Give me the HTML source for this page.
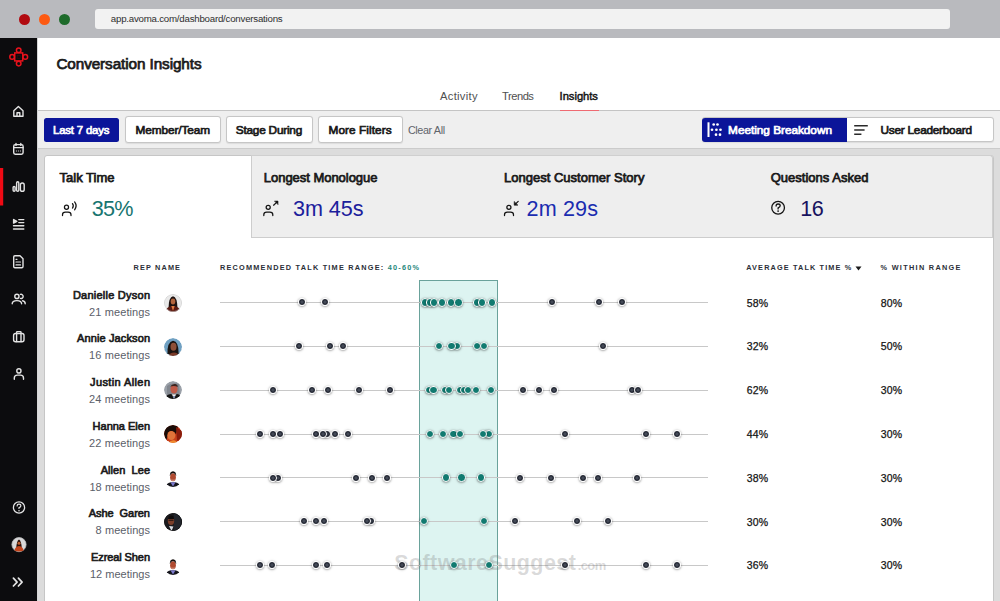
<!DOCTYPE html>
<html><head><meta charset="utf-8"><style>
html,body{margin:0;padding:0;}
body{width:1000px;height:601px;position:relative;overflow:hidden;background:#fff;font-family:"Liberation Sans", sans-serif;}
.t{position:absolute;white-space:nowrap;line-height:1;}
.dd,.dt{position:absolute;border-radius:50%;border:1.5px solid #fff;box-shadow:0 0.5px 2.2px rgba(0,0,0,.5);}
.dd{width:6px;height:6px;background:radial-gradient(circle,#444a57 0,#444a57 24%,#161a26 60%);}
.dt{width:6.3px;height:6.3px;background:#117a70;}
.av{position:absolute;width:18px;height:18px;border-radius:50%;background:#555;}
</style></head><body>
<div style="position:absolute;left:0px;top:0px;width:1000px;height:38px;background:#b9babe"></div>
<div style="position:absolute;left:18.7px;top:14px;width:11px;height:11px;border-radius:50%;background:#b10a10"></div>
<div style="position:absolute;left:39.1px;top:14px;width:11px;height:11px;border-radius:50%;background:#fd5a12"></div>
<div style="position:absolute;left:59.3px;top:14px;width:11px;height:11px;border-radius:50%;background:#1e6b2b"></div>
<div style="position:absolute;left:95px;top:9px;width:855px;height:20px;border-radius:3px;background:#f2f2f2"></div>
<div class="t" style="left:110.80px;top:14.00px;font-size:9.7px;font-weight:400;color:#2e2e2e;letter-spacing:-0.222px;">app.avoma.com/dashboard/conversations</div>
<div style="position:absolute;left:0px;top:38px;width:37px;height:563px;background:#0c0c0e"></div>
<div style="position:absolute;left:37px;top:38px;width:1px;height:563px;background:#d6d6d6"></div>
<div class="t" style="left:56.40px;top:56.00px;font-size:15.3px;font-weight:400;color:#1b1b1b;letter-spacing:-0.097px;-webkit-text-stroke:0.75px #1b1b1b;">Conversation Insights</div>
<div class="t" style="left:440.00px;top:91.00px;font-size:11.2px;font-weight:400;color:#505050;letter-spacing:0.304px;">Activity</div>
<div class="t" style="left:502.00px;top:91.00px;font-size:11.2px;font-weight:400;color:#505050;letter-spacing:-0.489px;">Trends</div>
<div class="t" style="left:559.60px;top:91.00px;font-size:11.2px;font-weight:400;color:#141414;letter-spacing:-0.028px;-webkit-text-stroke:0.45px #141414;">Insights</div>
<div style="position:absolute;left:38px;top:110px;width:962px;height:1px;background:#c4c4c4"></div>
<div style="position:absolute;left:559.5px;top:110px;width:39px;height:1px;background:#ef6a72"></div>
<div style="position:absolute;left:38px;top:111px;width:962px;height:37px;background:#efefef"></div>
<div style="position:absolute;left:38px;top:148px;width:962px;height:1px;background:#cbcbcb"></div>
<div style="position:absolute;left:38px;top:149px;width:962px;height:452px;background:#dcdcdc"></div>
<div style="position:absolute;left:44px;top:117.5px;width:75px;height:24.5px;border-radius:2.5px;background:#0b1599"></div>
<div class="t" style="left:53.00px;top:125.00px;font-size:11.3px;font-weight:400;color:#ffffff;letter-spacing:-0.139px;-webkit-text-stroke:0.68px #ffffff;">Last 7 days</div>
<div style="position:absolute;left:125px;top:116px;width:94px;height:24.5px;border:1px solid #c6c6c6;border-radius:3px;background:#fff;box-shadow:0 0.5px 1px rgba(0,0,0,0.08)"></div>
<div class="t" style="left:135.60px;top:125.00px;font-size:11.8px;font-weight:400;color:#1a1a1a;letter-spacing:-0.101px;-webkit-text-stroke:0.71px #1a1a1a;">Member/Team</div>
<div style="position:absolute;left:226px;top:116px;width:85px;height:24.5px;border:1px solid #c6c6c6;border-radius:3px;background:#fff;box-shadow:0 0.5px 1px rgba(0,0,0,0.08)"></div>
<div class="t" style="left:235.80px;top:125.00px;font-size:11.8px;font-weight:400;color:#1a1a1a;letter-spacing:-0.216px;-webkit-text-stroke:0.71px #1a1a1a;">Stage During</div>
<div style="position:absolute;left:318px;top:116px;width:83px;height:24.5px;border:1px solid #c6c6c6;border-radius:3px;background:#fff;box-shadow:0 0.5px 1px rgba(0,0,0,0.08)"></div>
<div class="t" style="left:328.50px;top:125.00px;font-size:11.8px;font-weight:400;color:#1a1a1a;letter-spacing:0.074px;-webkit-text-stroke:0.71px #1a1a1a;">More Filters</div>
<div class="t" style="left:407.90px;top:125.00px;font-size:10.8px;font-weight:400;color:#5f646b;letter-spacing:-0.377px;">Clear All</div>
<div style="position:absolute;left:701.8px;top:117px;width:290px;height:22.6px;border:1px solid #c6c6c6;border-radius:3px;background:#fff;box-shadow:0 0.5px 1px rgba(0,0,0,0.08)"></div>
<div style="position:absolute;left:701.8px;top:117.5px;width:145.7px;height:24.5px;border-radius:3px 0 0 3px;background:#0b1599"></div>
<div class="t" style="left:728.10px;top:125.00px;font-size:11.8px;font-weight:400;color:#ffffff;letter-spacing:-0.025px;-webkit-text-stroke:0.71px #ffffff;">Meeting Breakdown</div>
<div class="t" style="left:880.60px;top:125.00px;font-size:11.8px;font-weight:400;color:#1a1a1a;letter-spacing:-0.248px;-webkit-text-stroke:0.71px #1a1a1a;">User Leaderboard</div>
<div style="position:absolute;left:44px;top:155px;width:947.6px;height:460px;border:1px solid #c6c6c6;border-radius:3px;background:#fff"></div>
<div style="position:absolute;left:251px;top:155px;width:742px;height:83px;background:#eeeeee;border-left:1px solid #cdcdcd;border-bottom:1px solid #cdcdcd;border-top:1px solid #cfcfcf;border-right:1px solid #cfcfcf;border-radius:0 3px 0 0;box-sizing:border-box"></div>
<div class="t" style="left:59.50px;top:171.00px;font-size:13px;font-weight:400;color:#1a1a1a;letter-spacing:0.012px;-webkit-text-stroke:0.75px #1a1a1a;">Talk Time</div>
<div class="t" style="left:263.80px;top:171.00px;font-size:13px;font-weight:400;color:#1a1a1a;letter-spacing:-0.031px;-webkit-text-stroke:0.75px #1a1a1a;">Longest Monologue</div>
<div class="t" style="left:504.00px;top:171.00px;font-size:13px;font-weight:400;color:#1a1a1a;letter-spacing:0.011px;-webkit-text-stroke:0.75px #1a1a1a;">Longest Customer Story</div>
<div class="t" style="left:770.70px;top:171.00px;font-size:13px;font-weight:400;color:#1a1a1a;letter-spacing:0.017px;-webkit-text-stroke:0.75px #1a1a1a;">Questions Asked</div>
<div class="t" style="left:91.80px;top:198.00px;font-size:21.6px;font-weight:400;color:#177570;letter-spacing:-0.766px;">35%</div>
<div class="t" style="left:293.00px;top:198.00px;font-size:21.6px;font-weight:400;color:#1b209c;letter-spacing:-0.067px;">3m 45s</div>
<div class="t" style="left:526.60px;top:198.00px;font-size:21.6px;font-weight:400;color:#1a2cb0;letter-spacing:0.113px;">2m 29s</div>
<div class="t" style="left:800.20px;top:198.00px;font-size:21.6px;font-weight:400;color:#17125e;letter-spacing:-0.427px;">16</div>
<div class="t" style="left:133.60px;top:264.00px;font-size:7.3px;font-weight:700;color:#2b2f38;letter-spacing:1.143px;">REP NAME</div>
<div class="t" style="left:220.00px;top:264.00px;font-size:7.3px;font-weight:700;color:#2b2f38;letter-spacing:1.230px;">RECOMMENDED TALK TIME RANGE: <span style="color:#1f877c">40-60%</span></div>
<div class="t" style="left:746.25px;top:264.00px;font-size:7.3px;font-weight:700;color:#2b2f38;letter-spacing:1.139px;">AVERAGE TALK TIME %</div>
<svg style="position:absolute;left:855px;top:266px" width="7" height="5"><path d="M0.5 0.5 H6.5 L3.5 4.5 Z" fill="#1a1a1a"/></svg>
<div class="t" style="left:880.50px;top:264.00px;font-size:7.3px;font-weight:700;color:#2b2f38;letter-spacing:1.319px;">% WITHIN RANGE</div>
<div style="position:absolute;left:419.1px;top:280.2px;width:79px;height:340px;background:#ddf4f1;border:1px solid #6aa29b;box-sizing:border-box"></div>
<div class="t" style="right:849.76px;top:290.00px;font-size:11px;font-weight:400;color:#1a1a1a;letter-spacing:0.240px;-webkit-text-stroke:0.66px #1a1a1a;">Danielle Dyson</div>
<div class="t" style="right:849.90px;top:307.00px;font-size:11px;font-weight:400;color:#5b6069;letter-spacing:0.097px;">21 meetings</div>
<svg style="position:absolute;left:162.60px;top:292.90px" width="20" height="20" viewBox="0 0 20 20"><defs><clipPath id="avc0"><circle cx="10" cy="10" r="9"/></clipPath></defs><g clip-path="url(#avc0)"><circle cx="10" cy="10" r="9" fill="#e9e9e9"/><path d="M5.5 15 Q5.8 4 10 3.3 Q14.2 4 14.5 15 Z" fill="#1d1210"/><ellipse cx="10" cy="8.6" rx="2.3" ry="3" fill="#b2643c"/><path d="M2.5 19 Q3 13.5 10 13 Q17 13.5 17.5 19 Z" fill="#5a1a12"/><path d="M8.3 13 L10 18 L11.7 13 Z" fill="#e07a40"/><circle cx="10" cy="10" r="8.7" fill="none" stroke="#cfcfcf" stroke-width="0.7"/></g></svg>
<div style="position:absolute;left:219.8px;top:302.3px;width:488.6px;height:1px;background:#c8c8c8"></div>
<div class="t" style="left:746.70px;top:298.00px;font-size:10.5px;font-weight:400;color:#141414;letter-spacing:0.142px;-webkit-text-stroke:0.25px #141414;">58%</div>
<div class="t" style="left:880.80px;top:298.00px;font-size:10.5px;font-weight:400;color:#141414;letter-spacing:0.142px;-webkit-text-stroke:0.25px #141414;">80%</div>
<div class="t" style="right:849.88px;top:333.00px;font-size:11px;font-weight:400;color:#1a1a1a;letter-spacing:0.121px;-webkit-text-stroke:0.66px #1a1a1a;">Annie Jackson</div>
<div class="t" style="right:849.90px;top:350.00px;font-size:11px;font-weight:400;color:#5b6069;letter-spacing:0.097px;">16 meetings</div>
<svg style="position:absolute;left:162.60px;top:336.68px" width="20" height="20" viewBox="0 0 20 20"><defs><clipPath id="avc1"><circle cx="10" cy="10" r="9"/></clipPath></defs><g clip-path="url(#avc1)"><circle cx="10" cy="10" r="9" fill="#6fa0c2"/><path d="M1 12 Q3 17 8 19 H1 Z" fill="#3a6a8a"/><path d="M19 12 Q17 17 12 19 H19 Z" fill="#3a6a8a"/><path d="M4.5 17 Q4 5 10 3.8 Q16 4.5 15.6 17 Z" fill="#1a1412"/><ellipse cx="10.5" cy="9.8" rx="3" ry="4" fill="#8e5038"/><path d="M5 19 Q7 15.5 11 15.5 Q15 15.5 16 19 Z" fill="#7a3a28"/></g></svg>
<div style="position:absolute;left:219.8px;top:346.08px;width:488.6px;height:1px;background:#c8c8c8"></div>
<div class="t" style="left:746.70px;top:341.00px;font-size:10.5px;font-weight:400;color:#141414;letter-spacing:0.142px;-webkit-text-stroke:0.25px #141414;">32%</div>
<div class="t" style="left:880.80px;top:341.00px;font-size:10.5px;font-weight:400;color:#141414;letter-spacing:0.142px;-webkit-text-stroke:0.25px #141414;">50%</div>
<div class="t" style="right:849.60px;top:377.00px;font-size:11px;font-weight:400;color:#1a1a1a;letter-spacing:0.396px;-webkit-text-stroke:0.66px #1a1a1a;">Justin Allen</div>
<div class="t" style="right:849.90px;top:394.00px;font-size:11px;font-weight:400;color:#5b6069;letter-spacing:0.097px;">24 meetings</div>
<svg style="position:absolute;left:162.60px;top:380.46px" width="20" height="20" viewBox="0 0 20 20"><defs><clipPath id="avc2"><circle cx="10" cy="10" r="9"/></clipPath></defs><g clip-path="url(#avc2)"><circle cx="10" cy="10" r="9" fill="#9aa0a8"/><path d="M4 6 Q9 2 16 4 L17 19 H4 Z" fill="#6a6e76" opacity="0.5"/><ellipse cx="11" cy="9" rx="3.6" ry="4.6" fill="#c05a48"/><path d="M7.2 6.5 Q9 3.6 12.5 4 Q15 4.5 14.8 7 Q12 5.5 7.2 6.5 Z" fill="#3a2420"/><path d="M1.5 19 Q3 14.5 8 14 L11 16 L14 14 Q18 14.5 19 19 Z" fill="#141414"/><path d="M9 14.5 L11 19 L13 14.5 Z" fill="#f0f0f0"/><path d="M10.4 16 L11 19 L11.6 16 Z" fill="#1c3c8c"/></g></svg>
<div style="position:absolute;left:219.8px;top:389.86px;width:488.6px;height:1px;background:#c8c8c8"></div>
<div class="t" style="left:746.70px;top:385.00px;font-size:10.5px;font-weight:400;color:#141414;letter-spacing:0.142px;-webkit-text-stroke:0.25px #141414;">62%</div>
<div class="t" style="left:880.80px;top:385.00px;font-size:10.5px;font-weight:400;color:#141414;letter-spacing:0.142px;-webkit-text-stroke:0.25px #141414;">30%</div>
<div class="t" style="right:850.01px;top:421.00px;font-size:11px;font-weight:400;color:#1a1a1a;letter-spacing:-0.010px;-webkit-text-stroke:0.66px #1a1a1a;">Hanna Elen</div>
<div class="t" style="right:849.90px;top:438.00px;font-size:11px;font-weight:400;color:#5b6069;letter-spacing:0.097px;">22 meetings</div>
<svg style="position:absolute;left:162.60px;top:424.24px" width="20" height="20" viewBox="0 0 20 20"><defs><clipPath id="avc3"><circle cx="10" cy="10" r="9"/></clipPath></defs><g clip-path="url(#avc3)"><circle cx="10" cy="10" r="9" fill="#c8401a"/><path d="M1 10 Q1 1 10 1 Q13 1 15 2.5 L13 10 Q10 6 6 8 L3 17 Z" fill="#1a0c08"/><ellipse cx="8.3" cy="11.5" rx="4" ry="4.6" fill="#e0743a"/><path d="M13 3 L19 7 V14 L14 17 Z" fill="#8a1c0c"/><path d="M5 19 Q8 15.5 12 16.5 L15 19 Z" fill="#f08a30"/></g></svg>
<div style="position:absolute;left:219.8px;top:433.64px;width:488.6px;height:1px;background:#c8c8c8"></div>
<div class="t" style="left:746.70px;top:429.00px;font-size:10.5px;font-weight:400;color:#141414;letter-spacing:0.142px;-webkit-text-stroke:0.25px #141414;">44%</div>
<div class="t" style="left:880.80px;top:429.00px;font-size:10.5px;font-weight:400;color:#141414;letter-spacing:0.142px;-webkit-text-stroke:0.25px #141414;">30%</div>
<div class="t" style="right:849.96px;top:465.00px;font-size:11px;font-weight:400;color:#1a1a1a;letter-spacing:0.041px;-webkit-text-stroke:0.66px #1a1a1a;">Allen&nbsp; Lee</div>
<div class="t" style="right:849.93px;top:482.00px;font-size:11px;font-weight:400;color:#5b6069;letter-spacing:0.067px;">18 meetings</div>
<svg style="position:absolute;left:162.60px;top:468.02px" width="20" height="20" viewBox="0 0 20 20"><defs><clipPath id="avc4"><circle cx="10" cy="10" r="9"/></clipPath></defs><g clip-path="url(#avc4)"><circle cx="10" cy="10" r="9" fill="#ffffff"/><path d="M2.6 19 Q3.5 15 8 14.2 H12 Q16.5 15 17.4 19 Z" fill="#15151c"/><path d="M7.5 14.3 L10 18.6 L12.5 14.3 Z" fill="#7c7acb"/><ellipse cx="10" cy="9.2" rx="2.9" ry="4" fill="#b04a30"/><path d="M6.8 8.2 Q6.6 3.4 10 3.2 Q13.4 3.4 13.2 8.2 Q12.5 5.2 10 5 Q7.5 5.2 6.8 8.2 Z" fill="#17100e"/><path d="M8.4 11.9 Q10 12.8 11.6 11.9" stroke="#f0d0c0" stroke-width="0.6" fill="none"/></g></svg>
<div style="position:absolute;left:219.8px;top:477.42px;width:488.6px;height:1px;background:#c8c8c8"></div>
<div class="t" style="left:746.70px;top:473.00px;font-size:10.5px;font-weight:400;color:#141414;letter-spacing:0.142px;-webkit-text-stroke:0.25px #141414;">38%</div>
<div class="t" style="left:880.80px;top:473.00px;font-size:10.5px;font-weight:400;color:#141414;letter-spacing:0.142px;-webkit-text-stroke:0.25px #141414;">30%</div>
<div class="t" style="right:850.05px;top:508.00px;font-size:11px;font-weight:400;color:#1a1a1a;letter-spacing:-0.046px;-webkit-text-stroke:0.66px #1a1a1a;">Ashe&nbsp; Garen</div>
<div class="t" style="right:849.93px;top:525.00px;font-size:11px;font-weight:400;color:#5b6069;letter-spacing:0.066px;">8 meetings</div>
<svg style="position:absolute;left:162.60px;top:511.80px" width="20" height="20" viewBox="0 0 20 20"><defs><clipPath id="avc5"><circle cx="10" cy="10" r="9"/></clipPath></defs><g clip-path="url(#avc5)"><circle cx="10" cy="10" r="9" fill="#1a1a1e"/><path d="M11 1 H19 V19 H11 Z" fill="#22252c"/><ellipse cx="8" cy="8.8" rx="3.2" ry="4.2" fill="#7a3e2a"/><path d="M5 7 Q5 3.5 8.5 3.6 Q11 4 11 7 Z" fill="#0e0a0a"/><path d="M5.5 8.2 H10.5" stroke="#0b0b0b" stroke-width="0.9"/><path d="M6 14 L8.5 19 L10.5 14.5 Z" fill="#d8dde4"/><circle cx="10" cy="10" r="8.8" fill="none" stroke="#0c0c0c" stroke-width="0.8"/></g></svg>
<div style="position:absolute;left:219.8px;top:521.2px;width:488.6px;height:1px;background:#c8c8c8"></div>
<div class="t" style="left:746.70px;top:517.00px;font-size:10.5px;font-weight:400;color:#141414;letter-spacing:0.142px;-webkit-text-stroke:0.25px #141414;">30%</div>
<div class="t" style="left:880.80px;top:517.00px;font-size:10.5px;font-weight:400;color:#141414;letter-spacing:0.142px;-webkit-text-stroke:0.25px #141414;">30%</div>
<div class="t" style="right:850.10px;top:552.00px;font-size:11px;font-weight:400;color:#1a1a1a;letter-spacing:-0.103px;-webkit-text-stroke:0.66px #1a1a1a;">Ezreal Shen</div>
<div class="t" style="right:849.99px;top:569.00px;font-size:11px;font-weight:400;color:#5b6069;letter-spacing:0.007px;">12 meetings</div>
<svg style="position:absolute;left:162.60px;top:555.58px" width="20" height="20" viewBox="0 0 20 20"><defs><clipPath id="avc6"><circle cx="10" cy="10" r="9"/></clipPath></defs><g clip-path="url(#avc6)"><circle cx="10" cy="10" r="9" fill="#ffffff"/><path d="M2.6 19 Q3.5 15 8 14.2 H12 Q16.5 15 17.4 19 Z" fill="#15151c"/><path d="M7.5 14.3 L10 18.6 L12.5 14.3 Z" fill="#7c7acb"/><ellipse cx="10" cy="9.2" rx="2.9" ry="4" fill="#b04a30"/><path d="M6.8 8.2 Q6.6 3.4 10 3.2 Q13.4 3.4 13.2 8.2 Q12.5 5.2 10 5 Q7.5 5.2 6.8 8.2 Z" fill="#17100e"/><path d="M8.4 11.9 Q10 12.8 11.6 11.9" stroke="#f0d0c0" stroke-width="0.6" fill="none"/></g></svg>
<div style="position:absolute;left:219.8px;top:564.98px;width:488.6px;height:1px;background:#c8c8c8"></div>
<div class="t" style="left:746.70px;top:560.00px;font-size:10.5px;font-weight:400;color:#141414;letter-spacing:0.142px;-webkit-text-stroke:0.25px #141414;">36%</div>
<div class="t" style="left:880.80px;top:560.00px;font-size:10.5px;font-weight:400;color:#141414;letter-spacing:0.142px;-webkit-text-stroke:0.25px #141414;">30%</div>
<div class="t" style="left:394.20px;top:553.00px;font-size:21.5px;font-weight:700;color:rgba(110,110,110,0.26);letter-spacing:0.434px;">SoftwareSuggest</div>
<div class="t" style="left:577.70px;top:559.00px;font-size:13px;font-weight:700;color:rgba(110,110,110,0.26);letter-spacing:-0.614px;">.com</div>
<div class="dd" style="left:298.20px;top:298.40px"></div>
<div class="dd" style="left:321.40px;top:298.40px"></div>
<div class="dt" style="left:420.55px;top:298.25px"></div>
<div class="dt" style="left:425.85px;top:298.25px"></div>
<div class="dt" style="left:429.95px;top:298.25px"></div>
<div class="dt" style="left:437.85px;top:298.25px"></div>
<div class="dt" style="left:447.15px;top:298.25px"></div>
<div class="dt" style="left:454.35px;top:298.25px"></div>
<div class="dt" style="left:472.85px;top:298.25px"></div>
<div class="dt" style="left:477.75px;top:298.25px"></div>
<div class="dt" style="left:487.85px;top:298.25px"></div>
<div class="dd" style="left:548.30px;top:298.40px"></div>
<div class="dd" style="left:594.90px;top:298.40px"></div>
<div class="dd" style="left:618.30px;top:298.40px"></div>
<div class="dt" style="left:452.85px;top:342.03px"></div>
<div class="dd" style="left:295.00px;top:342.18px"></div>
<div class="dd" style="left:326.30px;top:342.18px"></div>
<div class="dd" style="left:338.60px;top:342.18px"></div>
<div class="dt" style="left:434.75px;top:342.03px"></div>
<div class="dt" style="left:447.35px;top:342.03px"></div>
<div class="dt" style="left:472.95px;top:342.03px"></div>
<div class="dt" style="left:480.05px;top:342.03px"></div>
<div class="dd" style="left:599.40px;top:342.18px"></div>
<div class="dd" style="left:269.30px;top:385.96px"></div>
<div class="dd" style="left:308.30px;top:385.96px"></div>
<div class="dd" style="left:323.70px;top:385.96px"></div>
<div class="dd" style="left:355.00px;top:385.96px"></div>
<div class="dd" style="left:386.20px;top:385.96px"></div>
<div class="dt" style="left:425.15px;top:385.81px"></div>
<div class="dt" style="left:429.25px;top:385.81px"></div>
<div class="dt" style="left:440.75px;top:385.81px"></div>
<div class="dt" style="left:444.85px;top:385.81px"></div>
<div class="dt" style="left:456.35px;top:385.81px"></div>
<div class="dt" style="left:459.65px;top:385.81px"></div>
<div class="dt" style="left:463.55px;top:385.81px"></div>
<div class="dt" style="left:472.15px;top:385.81px"></div>
<div class="dt" style="left:487.15px;top:385.81px"></div>
<div class="dd" style="left:519.10px;top:385.96px"></div>
<div class="dd" style="left:534.90px;top:385.96px"></div>
<div class="dd" style="left:550.30px;top:385.96px"></div>
<div class="dd" style="left:628.40px;top:385.96px"></div>
<div class="dd" style="left:633.50px;top:385.96px"></div>
<div class="dd" style="left:322.60px;top:429.74px"></div>
<div class="dt" style="left:483.25px;top:429.59px"></div>
<div class="dt" style="left:484.75px;top:429.59px"></div>
<div class="dd" style="left:256.00px;top:429.74px"></div>
<div class="dd" style="left:268.70px;top:429.74px"></div>
<div class="dd" style="left:276.10px;top:429.74px"></div>
<div class="dd" style="left:312.00px;top:429.74px"></div>
<div class="dd" style="left:319.10px;top:429.74px"></div>
<div class="dd" style="left:330.80px;top:429.74px"></div>
<div class="dd" style="left:343.50px;top:429.74px"></div>
<div class="dt" style="left:426.15px;top:429.59px"></div>
<div class="dt" style="left:438.65px;top:429.59px"></div>
<div class="dt" style="left:449.45px;top:429.59px"></div>
<div class="dt" style="left:455.95px;top:429.59px"></div>
<div class="dt" style="left:478.95px;top:429.59px"></div>
<div class="dd" style="left:560.60px;top:429.74px"></div>
<div class="dd" style="left:641.60px;top:429.74px"></div>
<div class="dd" style="left:673.10px;top:429.74px"></div>
<div class="dd" style="left:274.00px;top:473.52px"></div>
<div class="dd" style="left:269.30px;top:473.52px"></div>
<div class="dd" style="left:351.90px;top:473.52px"></div>
<div class="dd" style="left:367.70px;top:473.52px"></div>
<div class="dd" style="left:383.10px;top:473.52px"></div>
<div class="dt" style="left:441.75px;top:473.37px"></div>
<div class="dt" style="left:457.25px;top:473.37px"></div>
<div class="dt" style="left:476.95px;top:473.37px"></div>
<div class="dd" style="left:516.20px;top:473.52px"></div>
<div class="dd" style="left:547.40px;top:473.52px"></div>
<div class="dd" style="left:578.50px;top:473.52px"></div>
<div class="dd" style="left:594.30px;top:473.52px"></div>
<div class="dd" style="left:633.30px;top:473.52px"></div>
<div class="dd" style="left:367.10px;top:517.30px"></div>
<div class="dd" style="left:299.70px;top:517.30px"></div>
<div class="dd" style="left:312.00px;top:517.30px"></div>
<div class="dd" style="left:320.00px;top:517.30px"></div>
<div class="dd" style="left:362.60px;top:517.30px"></div>
<div class="dt" style="left:419.85px;top:517.15px"></div>
<div class="dt" style="left:480.05px;top:517.15px"></div>
<div class="dd" style="left:510.70px;top:517.30px"></div>
<div class="dd" style="left:573.00px;top:517.30px"></div>
<div class="dd" style="left:604.20px;top:517.30px"></div>
<div class="dd" style="left:256.00px;top:561.08px"></div>
<div class="dd" style="left:268.30px;top:561.08px"></div>
<div class="dd" style="left:312.00px;top:561.08px"></div>
<div class="dd" style="left:322.60px;top:561.08px"></div>
<div class="dd" style="left:397.90px;top:561.08px"></div>
<div class="dt" style="left:449.55px;top:560.93px"></div>
<div class="dt" style="left:484.65px;top:560.93px"></div>
<div class="dd" style="left:560.60px;top:561.08px"></div>
<div class="dd" style="left:641.60px;top:561.08px"></div>
<div class="dd" style="left:673.10px;top:561.08px"></div>
<svg style="position:absolute;left:0;top:0" width="38" height="601"><rect x="0" y="168" width="3.2" height="37.5" fill="#f00a14"/><g stroke="#e8121c" stroke-width="1.5" fill="#0c0c0e"><rect x="14.7" y="52.9" width="8" height="8"/><circle cx="18.7" cy="50.2" r="2.3"/><circle cx="12.1" cy="56.9" r="2.3"/><circle cx="25.3" cy="56.9" r="2.3"/><circle cx="18.7" cy="63.6" r="2.3"/></g><rect x="17.2" y="55.4" width="3" height="3" fill="none" stroke="#3a0a0a" stroke-width="0.6"/><g fill="none" stroke="#e4e4e4" stroke-width="1.4" stroke-linecap="round" stroke-linejoin="round"><path d="M13.8 116.3 V110.8 L18.4 106.6 L23 110.8 V116.3 Z M17 116.3 V112.8 H19.8 V116.3"/><rect x="13.7" y="144.6" width="9.4" height="9.6" rx="1.6"/><path d="M13.7 147.6 H23.1 M16 143.4 V145.4 M20.8 143.4 V145.4"/><path d="M16.3 151 H16.5 M18.3 151 H18.5 M20.3 151 H20.5" stroke-width="1"/><rect x="13.1" y="186.5" width="2" height="4.8" rx="1"/><rect x="16.6" y="181.8" width="2.2" height="9.5" rx="1.1"/><rect x="20.4" y="183" width="3.8" height="8.3" rx="1.9"/><path d="M13.6 219.5 L16.8 221.3 L13.6 223.1 Z" fill="#e4e4e4"/><path d="M18.8 219.6 H23.8 M18.8 222.6 H23.8 M13.5 225.8 H23.8 M13.5 229 H23.8"/><path d="M14.9 255.8 H20 L23 258.8 V266.6 Q23 267.8 21.8 267.8 H14.9 Q13.7 267.8 13.7 266.6 V257 Q13.7 255.8 14.9 255.8 Z"/><path d="M16 259.3 H17 M16 262 H20.5 M16 264.9 H20.5" stroke-width="1.2"/><circle cx="16.9" cy="296.4" r="2.1"/><path d="M20.4 294.4 A2.1 2.1 0 1 1 20.4 298.4"/><path d="M12.2 303.8 Q12.2 300.6 16.9 300.6 Q21.6 300.6 21.6 303.8 M22.6 300.8 Q25.2 301.2 25.2 303.8"/><rect x="13.6" y="333.5" width="10.4" height="8.2" rx="2"/><path d="M16.6 333.5 V332.2 Q16.6 331.6 17.2 331.6 H20.4 Q21 331.6 21 332.2 V333.5 M16.6 333.8 V341.5 M21 333.8 V341.5"/><circle cx="18.9" cy="370.9" r="2.1"/><path d="M14.3 379.3 V378 Q14.3 375.1 17.3 375.1 H20.5 Q23.5 375.1 23.5 378 V379.3"/><circle cx="19" cy="507.5" r="5.6" stroke-width="1.3"/><path d="M17.1 505.9 Q17.1 504.2 19 504.2 Q20.9 504.2 20.9 505.8 Q20.9 507 19 507.6 V508.5" stroke-width="1.2"/><path d="M13.4 578.2 L17.1 582.1 L13.4 586 M18.4 578.2 L22.1 582.1 L18.4 586" stroke-width="1.7"/></g><circle cx="19" cy="510.7" r="0.8" fill="#e4e4e4"/><circle cx="19" cy="544.6" r="7.1" fill="#d8d8d8" stroke="#bdbdbd" stroke-width="0.8"/><path d="M16.3 548 Q16.5 541 19 539.5 Q21.5 541 21.7 548 Z" fill="#2a1008"/><circle cx="19" cy="543.2" r="1.5" fill="#c06030"/><path d="M14.5 550.5 Q15 546.5 19 546 Q23 546.5 23.5 550.5 Q19 552.5 14.5 550.5 Z" fill="#c2441c"/></svg>
<svg style="position:absolute;left:0;top:0" width="1000" height="601"><g fill="none" stroke="#141414" stroke-width="1.25" stroke-linecap="round"><circle cx="66.5" cy="207.2" r="2.05"/><path d="M62.5 215.6 V214.8 Q62.5 212.1 65.4 212.1 H68.1 Q71 212.1 71 214.8 V215.6"/><path d="M72.5 203.6 Q74.1 205.8 72.5 208.1 M74.6 201.9 Q77.6 205.8 74.6 209.8"/><circle cx="268.2" cy="207.3" r="2.05"/><path d="M263.8 215.6 V214.8 Q263.8 212.1 266.7 212.1 H269.9 Q272.8 212.1 272.8 214.8 V215.6"/><path d="M273.6 205.2 L276.6 202.4"/><path d="M274.8 201.1 H278 V204.3 Z" fill="#141414" stroke-width="0.6" stroke-linejoin="round"/><circle cx="508.9" cy="207.3" r="2.05"/><path d="M504.5 215.6 V214.8 Q504.5 212.1 507.4 212.1 H510.6 Q513.5 212.1 513.5 214.8 V215.6"/><path d="M518.2 201.4 L515.4 204.1"/><path d="M514.2 201.8 V205.2 H517.6 Z" fill="#141414" stroke-width="0.6" stroke-linejoin="round"/><circle cx="778.1" cy="207.7" r="6.35" stroke-width="1.3"/><path d="M776.1 206 Q776.1 204 778.1 204 Q780.2 204 780.2 205.8 Q780.2 207.2 778.1 207.9 V208.9" stroke-width="1.3"/></g><circle cx="778.1" cy="211.1" r="0.85" fill="#141414"/><rect x="707.5" y="122.3" width="2" height="14.7" fill="#fff"/><circle cx="713.7" cy="124.5" r="1.35" fill="#fff"/><circle cx="717.5" cy="124.5" r="1.35" fill="#fff"/><circle cx="712" cy="129.75" r="1.35" fill="#fff"/><circle cx="716.4" cy="129.75" r="1.35" fill="#fff"/><circle cx="720.5" cy="129.75" r="1.35" fill="#fff"/><circle cx="716" cy="134.7" r="1.35" fill="#fff"/><circle cx="720" cy="134.7" r="1.35" fill="#fff"/><path d="M854.2 125.8 H867.8 M854.2 130 H864.6 M854.2 134.2 H861.4" stroke="#2a2a2a" stroke-width="1.5"/></svg>

</body></html>
